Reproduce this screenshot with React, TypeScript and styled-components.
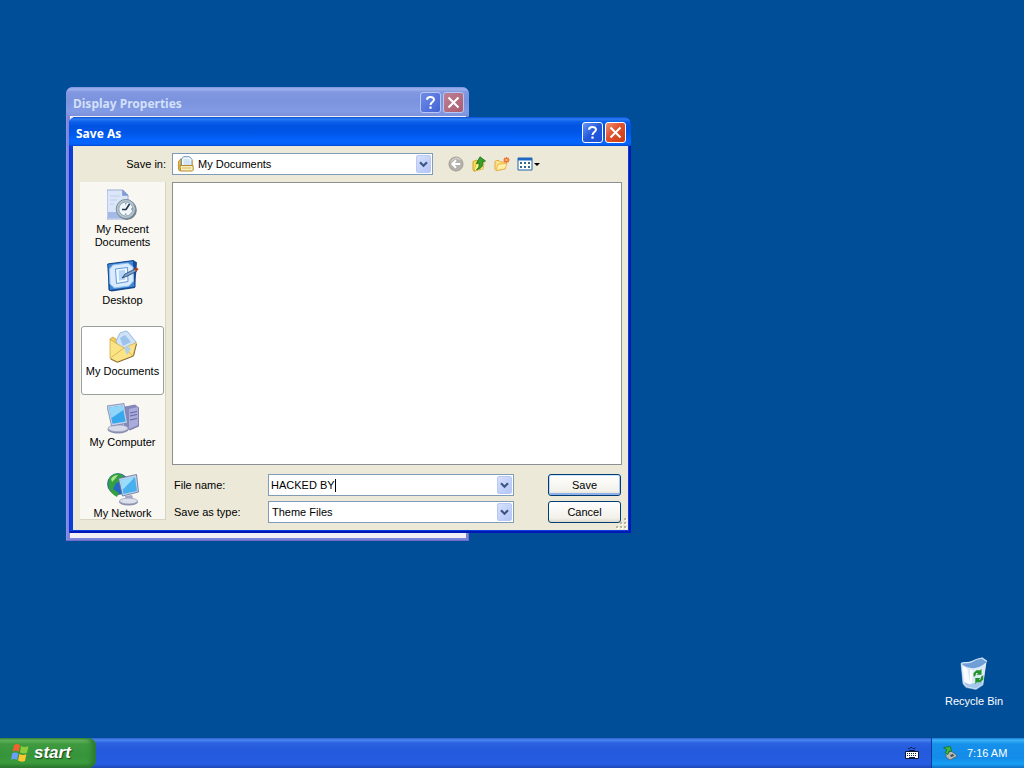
import React from "react";
import styled, { createGlobalStyle, css } from "styled-components";

const GlobalStyle = createGlobalStyle`
  *, *::before, *::after { box-sizing: border-box; }
  body {
    margin: 0;
    background: #004e98;
    color: #000;
    font: 11px/13px "Liberation Sans", Arial, sans-serif;
  }
  button, input, select { font: inherit; color: inherit; margin: 0; }
`;

const Screen = styled.div`
  min-height: 100vh;
  display: flex;
  flex-direction: column;
`;

const Desktop = styled.main`
  position: relative;
  flex: 1;
  min-height: 560px;
`;

const Window = styled.section<{ $active?: boolean }>`
  position: absolute;
  display: flex;
  flex-direction: column;
  padding: 0 3px 3px 4px;
  border-radius: 7px 7px 0 0;
  background: ${(p) => (p.$active ? "#0a3fdc" : "#7d85dc")};
  box-shadow: ${(p) =>
    p.$active
      ? "inset 1px 0 #0831d9, inset -2px -2px #0019b4"
      : "inset -1px -1px #6a6cc8, inset 1px 0 #8f8fe8"};
`;

const PropertiesWindow = styled(Window)`
  left: 66px;
  top: 87px;
  width: 403px;
  height: 454px;
`;

const SaveWindow = styled(Window)`
  left: 69px;
  top: 117px;
  width: 562px;
`;

const TitleBar = styled.header<{ $active?: boolean }>`
  display: flex;
  align-items: center;
  gap: 2px;
  height: 29px;
  margin: 0 -3px 0 -4px;
  padding: 2px 5px 0 7px;
  border-radius: 7px 7px 0 0;
  color: ${(p) => (p.$active ? "#fff" : "#d3e0fa")};
  background: ${(p) =>
    p.$active
      ? "linear-gradient(#0a4fd0 0, #2a7cf4 2px, #0a5fea 5px, #0053e1 9px, #0056e8 16px, #0464fc 23px, #0463f8 27px, #0048d4 29px)"
      : "linear-gradient(#7a90dc 0, #9fb4ee 2px, #8298e0 5px, #7b92de 14px, #839be4 24px, #7a90dc 29px)"};
`;

const Title = styled.h1`
  flex: 1;
  margin: 0;
  padding-top: 2px;
  font: bold 12px/16px "Noto Sans", "Open Sans", sans-serif;
`;

const CaptionButton = styled.button<{ $kind: "help" | "close"; $dim?: boolean }>`
  width: 21px;
  height: 21px;
  padding: 0;
  display: grid;
  place-items: center;
  border: 1px solid ${(p) => (p.$dim ? "#b9c6f2" : "#fff")};
  border-radius: 3px;
  color: #fff;
  background: ${(p) =>
    p.$kind === "help"
      ? p.$dim
        ? "linear-gradient(135deg, #6f8ce8, #4263d4)"
        : "linear-gradient(135deg, #6b96f4, #2459dc 50%, #1c50d4)"
      : p.$dim
        ? "linear-gradient(135deg, #bb8098, #ae5c6c)"
        : "linear-gradient(135deg, #f09076, #e0502c 45%, #c83c14)"};
`;

const EmptyPane = styled.div`
  flex: 1;
  background: #f2f0f4;
`;

const DialogBody = styled.form`
  display: grid;
  grid-template-columns: 86px 1fr;
  grid-template-rows: 22px 290px auto;
  column-gap: 6px;
  padding: 7px 6px 7px 7px;
  background: #ece9d8;
  position: relative;
`;

const SaveInLabel = styled.label`
  justify-self: end;
  line-height: 22px;
`;

const TopRow = styled.div`
  display: flex;
  align-items: center;
`;

const Combo = styled.div`
  display: flex;
  align-items: center;
  height: 22px;
  padding: 1px;
  border: 1px solid #7f9db9;
  background: #fff;
  flex: 1;
`;

const FolderCombo = styled(Combo)`
  flex: 0 0 261px;
  padding-left: 5px;
  gap: 4px;
`;

const fieldText = css`
  border: 0;
  outline: 0;
  padding: 0;
  background: transparent;
  line-height: 18px;
  height: 18px;
`;

const Select = styled.select`
  ${fieldText}
  appearance: none;
  flex: 1;
`;

const TypeSelect = styled(Select)`
  padding-left: 2px;
`;

const NameInput = styled.input`
  ${fieldText}
  width: 64px;
  margin-left: 1px;
  caret-color: transparent;
`;

const Caret = styled.span`
  width: 1px;
  height: 13px;
  margin-right: auto;
  background: #000;
`;

const ArrowBox = styled.span`
  width: 15px;
  height: 18px;
  display: grid;
  place-items: center;
  border: 1px solid #b9c8f4;
  border-radius: 2px;
  background: linear-gradient(135deg, #d6e0fc, #b4c6f6);
`;

const ArrowButton = styled(ArrowBox).attrs({ as: "button", type: "button" })`
  padding: 0;
`;

const Tools = styled.div`
  display: flex;
  align-items: center;
  gap: 7px;
  margin-left: 15px;
`;

const ToolButton = styled.button`
  padding: 0;
  border: 0;
  background: none;
  display: flex;
`;

const Places = styled.nav`
  grid-row: 2 / 4;
  height: 338px;
  margin-top: 7px;
  padding: 2px 1px 0;
  overflow: hidden;
  border-right: 1px solid #d8d4c0;
  border-bottom: 1px solid #d8d4c0;
  background: #f8f7f1;
`;

const Place = styled.button<{ $selected?: boolean }>`
  display: flex;
  flex-direction: column;
  align-items: center;
  width: 100%;
  height: 69px;
  margin-bottom: 2px;
  padding: 3px 0 0;
  border: 1px solid ${(p) => (p.$selected ? "#98a09c" : "transparent")};
  border-radius: 3px;
  background: ${(p) => (p.$selected ? "#fff" : "transparent")};
`;

const PlaceName = styled.span`
  margin-top: 1px;
`;

const FileList = styled.div`
  margin-top: 7px;
  border: 1px solid #8a9094;
  background: #fff;
`;

const Fields = styled.div`
  display: grid;
  grid-template-columns: 90px 1fr 73px;
  row-gap: 5px;
  padding: 9px 1px 0 2px;
  align-items: center;
`;

const ComboCell = styled.div`
  display: flex;
  padding: 0 34px 0 4px;
`;

const PushButton = styled.button<{ $primary?: boolean }>`
  height: 22px;
  padding: 0;
  border: 1px solid #003c74;
  border-radius: 3px;
  background: linear-gradient(#fff, #f2f1ea 80%, #dcd8cc);
  box-shadow: ${(p) =>
    p.$primary
      ? "inset 0 1px #cee7ff, inset 1px 0 #bcd4f6, inset -1px 0 #a9c6f2, inset 0 -2px #8fb0ea"
      : "none"};
`;

const Grip = styled.svg`
  position: absolute;
  right: 1px;
  bottom: 1px;
`;

const DesktopIcon = styled.button`
  position: absolute;
  right: 14px;
  bottom: 30px;
  width: 72px;
  padding: 0;
  border: 0;
  background: none;
  color: #fff;
  display: flex;
  flex-direction: column;
  align-items: center;
  gap: 4px;
`;

const Taskbar = styled.footer`
  display: flex;
  align-items: stretch;
  height: 30px;
  color: #fff;
  background: linear-gradient(#2a5fd0 0, #4a88f0 2px, #2a62e0 5px, #245adc 12px, #255ce2 26px, #1c46b4 30px);
`;

const StartButton = styled.button`
  width: 96px;
  padding: 0 0 0 10px;
  display: flex;
  align-items: center;
  gap: 4px;
  border: 0;
  border-radius: 0 8px 8px 0;
  color: #fff;
  background: linear-gradient(#3c8a3c 0, #6cbc64 2px, #3f9a3f 6px, #36943a 18px, #3c9c3c 25px, #2a7430 30px);
  box-shadow: inset -4px 0 5px #2b7a30;
  font: italic bold 17px/24px "Liberation Sans", Arial, sans-serif;
  text-shadow: 1px 1px 1px #1c4a1c;
`;

const TrayTools = styled.div`
  display: flex;
  align-items: center;
  margin-left: auto;
  padding-right: 12px;
`;

const Tray = styled.div`
  display: flex;
  align-items: center;
  gap: 10px;
  width: 93px;
  padding-left: 11px;
  border-left: 1px solid #0c3c9c;
  background: linear-gradient(#1478d8 0, #3cb4f8 2px, #1690ea 6px, #128ce8 20px, #16a0f4 26px, #1070c4 30px);
`;

const Chevron = () => (
  <svg width="9" height="7" viewBox="0 0 9 7" aria-hidden="true">
    <path d="M1 1.2 4.5 4.7 8 1.2" fill="none" stroke="#3f5683" strokeWidth="2.2" />
  </svg>
);

const HelpMark = () => (
  <svg width="15" height="15" viewBox="0 0 15 15" aria-hidden="true">
    <path d="M4 4.8C4 1.2 11 1.2 11 4.6 11 7 7.5 7 7.5 10" fill="none" stroke="currentColor" strokeWidth="2" />
    <path d="M6.4 11.5h2.2v2.2H6.4z" fill="currentColor" />
  </svg>
);

const CloseMark = () => (
  <svg width="15" height="15" viewBox="0 0 15 15" aria-hidden="true">
    <path d="M2.5 2.5 12.5 12.5M12.5 2.5 2.5 12.5" stroke="currentColor" strokeWidth="2.1" />
  </svg>
);

const Caption = ({ title, active }: { title: string; active?: boolean }) => (
  <TitleBar $active={active}>
    <Title>{title}</Title>
    <CaptionButton type="button" $kind="help" $dim={!active} aria-label="Help">
      <HelpMark />
    </CaptionButton>
    <CaptionButton type="button" $kind="close" $dim={!active} aria-label="Close">
      <CloseMark />
    </CaptionButton>
  </TitleBar>
);

const DocumentsIcon = () => (
  <svg width="16" height="16" viewBox="0 0 16 16" aria-hidden="true">
    <path d="M.5 5.5 3 2.5V14L1.500 15 .5 13.500z" fill="#eebb3c" stroke="#a87c20" strokeWidth=".7" />
    <path d="M3.500 3 5.500.7h6L14 3.500V11H3.500z" fill="#f2f8ff" stroke="#6a94bc" />
    <path d="M5.500 4h6M5.500 6h7M5.500 8h7" stroke="#b4d0ec" />
    <path d="M14.500 4.500v6" stroke="#d8a83c" />
    <path d="M2 9.500h13L15.300 14l-1 1H2.500z" fill="#f8edc0" stroke="#b58a2c" />
    <path d="M4 12h9" stroke="#d8b860" />
  </svg>
);

const BackIcon = () => (
  <svg width="16" height="16" viewBox="0 0 16 16" aria-hidden="true">
    <circle cx="8" cy="8" r="7" fill="#b3b1a9" stroke="#a09e96" />
    <path d="M3 5.5A6 6 0 0 1 12.5 4" fill="none" stroke="#cfcec6" strokeWidth="1.5" />
    <path d="M12.2 8H4.5M8 4.3 4.3 8 8 11.7" fill="none" stroke="#fff" strokeWidth="2" />
  </svg>
);

const UpIcon = () => (
  <svg width="16" height="16" viewBox="0 0 16 16" aria-hidden="true">
    <path d="M2 5.500 6 4l1 1.500 5-1V12L3 15.300 2 14z" fill="#f7df52" stroke="#d0a42a" />
    <path d="M3 15 5 8l8-2-1 7z" fill="#fdf284" stroke="#d8b038" strokeWidth=".8" />
    <path d="M5.500 13.500c2.600-1.300 3-4 2.300-6.500L5.300 7.500 9 .8 14.500 5l-3 .8c1 4.200-1.500 7.200-6 7.700z" fill="#37a02d" stroke="#1c6c1c" strokeWidth=".8" />
  </svg>
);

const NewFolderIcon = () => (
  <svg width="16" height="16" viewBox="0 0 16 16" aria-hidden="true">
    <path d="M1 5.500 2.500 4.500 5 4.500l1.500 1.500H11V13L2 14.500 1 13.500z" fill="#fbe38a" stroke="#e8a83c" />
    <path d="m2 14.500 2-6.300 9-.7-2 5.500z" fill="#fff0a8" stroke="#eaac40" strokeWidth=".8" />
    <path d="M12.500 1v6M9.500 4h6M10.400 2l4.200 4M14.600 2l-4.200 4" stroke="#ee6a2c" strokeWidth="1.300" />
    <circle cx="12.500" cy="4" r="1.200" fill="#ffc070" />
  </svg>
);

const ViewsIcon = () => (
  <svg width="23" height="16" viewBox="0 0 23 16" aria-hidden="true">
    <path d="M1 2h14v12H1z" fill="#fff" stroke="#1c64ac" />
    <path d="M1 2h14v2.500H1z" fill="#1c68c4" />
    <path d="M3 6h2v2H3zm4 0h2v2H7zm4 0h2v2h-2zM3 10h2v2H3zm4 0h2v2H7zm4 0h2v2h-2z" fill="#35688c" />
    <path d="M17 7h6l-3 3z" fill="#000" />
  </svg>
);

const RecentIcon = () => (
  <svg width="32" height="34" viewBox="0 0 32 34" aria-hidden="true">
    <path d="M0 2h16l5 5v24H0z" fill="#dbe6f8" stroke="#9badd6" />
    <path d="M1 24h14v6H1z" fill="#a5b9e6" />
    <path d="M15.500 2v5.500H21z" fill="#7d9cd8" stroke="#7f97c8" strokeWidth=".6" />
    <path d="M3 8h10M3 12h7M3 16h4" stroke="#c8d6f0" strokeWidth="1.500" />
    <circle cx="19.800" cy="22" r="10" fill="#737f8a" />
    <circle cx="18.800" cy="21" r="9.600" fill="#b4c4cf" stroke="#7c8f9c" />
    <circle cx="18.800" cy="21" r="7" fill="#f0f6fa" stroke="#8fa4b2" />
    <path d="M19 21.500 22.500 16M15 21.500h4.500" fill="none" stroke="#23374a" strokeWidth="1.600" />
    <path d="M18.800 15v1.500M18.800 25.500V27M24 21h1.500" stroke="#54707f" />
  </svg>
);

const DesktopPadIcon = () => (
  <svg width="32" height="34" viewBox="0 0 32 34" aria-hidden="true">
    <path d="m1 5 26-3.500 3 2L28 29 4.500 32.500 1.500 31z" fill="#174c98" />
    <path d="M.7 5 26.500 1.500 28 28 2.500 31.500z" fill="#3f86d4" stroke="#16468c" />
    <path d="m6 6 15-2 5 4 .500 14-4.500 5-14.500 2-4.500-4L2.500 10z" fill="#d9ebfc" stroke="#8cc0f0" />
    <path d="m8.500 10 12-1.500.500 14L9.500 24.500z" fill="#f4faff" stroke="#5c98dc" />
    <path d="m11.500 11.500 6.500-.7.300 10-6.300 1z" fill="#b7d7f7" />
    <path d="m15 19 3-4 10-5 2 2-9.500 5z" fill="#7aa2cc" stroke="#1f3e6c" strokeWidth=".8" />
    <path d="m27 10 3-1.500 1.500 2-2.500 2z" fill="#b84020" />
  </svg>
);

const OpenFolderIcon = () => (
  <svg width="32" height="34" viewBox="0 0 32 34" aria-hidden="true">
    <path d="m3 9 3-2 4 3 12-4 5 18-17 6z" fill="#f0cb56" stroke="#c69c3c" strokeWidth=".8" />
    <path d="M9 11 13 3l6-2 2 1 8 10-9 12-9-6z" fill="#cfe2f8" stroke="#85abd8" strokeWidth=".8" />
    <path d="m13 8 5-3 6 7-8 4z" fill="#9bc3ec" />
    <path d="M3 9.500 17 18l12.500-5.500L26 26l-16 6-7-4z" fill="#fbe486" stroke="#d2a848" strokeWidth=".8" />
    <path d="m3.500 28 13.500-10 9 8" fill="none" stroke="#e0b850" />
    <path d="m17 18 4-2 3 3-4 6z" fill="#b3cfe8" />
    <path d="m3.500 29 7 3.300 16-6.300 3-12" fill="none" stroke="#7c6430" strokeWidth=".9" />
  </svg>
);

const ComputerIcon = () => (
  <svg width="32" height="34" viewBox="0 0 32 34" aria-hidden="true">
    <path d="m18 6 10-2 4 3v18l-9 4-6-3z" fill="#8587bc" stroke="#7678ac" strokeWidth=".8" />
    <path d="m22 8 9-2v18l-9 4z" fill="#a9abd8" />
    <path d="m23 12 7-1.500M23 15l7-1.500M23 19l7-1.500" stroke="#6669a4" strokeWidth="1.200" />
    <path d="m8 23 8-1 1 5H8z" fill="#a4a8c8" />
    <ellipse cx="11" cy="28.500" rx="10.500" ry="4" fill="#8a8eae" />
    <ellipse cx="11" cy="27.300" rx="10" ry="3.400" fill="#d7dae8" stroke="#9a9ebc" strokeWidth=".7" />
    <path d="m0 5 17-2.500 3.500 19.500-16 3z" fill="#c7d2e8" stroke="#7384ac" strokeWidth=".8" />
    <path d="M2 6.500 15.500 4.600 18.700 20.500 5.500 22.800z" fill="#38a8ee" />
    <path d="m2 6.500 13.500-1.900 1 4.400L4.500 17z" fill="#8fd6fb" />
  </svg>
);

const NetworkIcon = () => (
  <svg width="34" height="34" viewBox="0 0 34 34" aria-hidden="true">
    <circle cx="12" cy="12" r="10.500" fill="#2468c4" stroke="#2a5ca8" strokeWidth=".7" />
    <path d="M4 5c5-5 10-4 14-1l-3 6-5 1-3 6 6 4-2 4C3 21 0 12 4 5z" fill="#35a040" />
    <path d="M5 7c2-3 4-4 7-4l-3 4-3 3z" fill="#a8e48a" />
    <path d="m19 24 7-1 2 6h-8z" fill="#a4a8c8" />
    <ellipse cx="22.500" cy="30" rx="9.500" ry="3.500" fill="#898dae" />
    <ellipse cx="22.500" cy="29" rx="9" ry="2.900" fill="#dcdfec" stroke="#9a9ebc" strokeWidth=".7" />
    <path d="m12.500 6.500 18-4L32.500 20 16.500 24z" fill="#c5d3ea" stroke="#5b7098" strokeWidth=".8" />
    <path d="m14.500 8 14.500-3 2 14-13.500 3z" fill="#48b0ee" />
    <path d="m14.500 8 14.500-3L16.500 18z" fill="#9adcfb" />
  </svg>
);

const RecycleIcon = () => (
  <svg width="32" height="34" viewBox="0 0 32 34" aria-hidden="true">
    <path d="M3 6.500 28 3 25 28l-7 4.500-10-2-3-3.500z" fill="#c6dcf2" stroke="#8fb5da" strokeWidth=".6" />
    <path d="M3 6.500C7 4 10 7 14 4.500S21 1 24 1l5 3.500c-4 6-8 7-14 7.500S6 10 3 6.500z" fill="#6f9fd6" />
    <path d="M3 6.500C7 4.500 10 7 14 4.500S21 1.500 24 1l5 3.500" fill="none" stroke="#d4e8fa" strokeWidth="1.200" />
    <path d="M3 6.500c7 6 17 7 25.500-1.500L25 27l-7 5-9-2-4-4z" fill="#dce9f6" />
    <path d="m4.500 9 5 3 2.500 15-5.500-2zM12 13h3l-1 13-2 1z" fill="#f8fcff" />
    <path d="m5.500 25 6 2.500 7-2 6-1.500v3l-6.500 4.500-9-2z" fill="#a4c8ec" />
    <path d="M15.500 19.500v-3.200l3-3h3.700l1.300-1.500v6h-5l1.600-1.900-1.800.2-1.300 3.400z" fill="#239329" />
    <path d="M25.300 18.300v4.200l-3 2.800h-3.500l-1.500 1.900v-6.300h5.200l-1.800 2 1.500-.2 1.200-3.400z" fill="#239329" />
  </svg>
);

const FlagIcon = () => (
  <svg width="20" height="20" viewBox="0 0 20 20" aria-hidden="true">
    <path d="M4 2c3-1.500 4-1 6 .3L8.700 8.800C6.500 7.400 5 7.500 2.700 8.400z" fill="#f0622c" />
    <path d="M11 3c2.500 1.300 4.300 1.200 7.500.2L17 9.800c-2.700 1-4.200.8-7-.4z" fill="#8ccc3c" />
    <path d="M2.400 10c2.600-1 4-.7 6 .4L7 17c-2.200-1.400-3.700-1.300-6-.4z" fill="#6a9ef8" />
    <path d="M9.400 11c2.600 1.300 4.300 1.300 7 .3L15 18c-2.600 1-4.300.8-7-.5z" fill="#fbc832" />
  </svg>
);

const KeyboardIcon = () => (
  <svg width="14" height="14" viewBox="0 0 14 14" aria-hidden="true">
    <path d="M3 2.500h1.500l1-1H7l1 1h1.500l1-1M4 4.500h6" fill="none" stroke="#081c50" />
    <path d="M.5 5.500h13v7H.5z" fill="#fff" stroke="#0a1638" />
    <path d="M2 7.500h10M2 9.500h10" stroke="#10204c" strokeDasharray="1 1" />
    <path d="M4 11.500h6" stroke="#10204c" />
  </svg>
);

const TrayDeviceIcon = () => (
  <svg width="14" height="16" viewBox="0 0 14 16" aria-hidden="true">
    <path d="m3 9 5-3 5.500 4v1.500L7 15 3 12z" fill="#b8bcb8" stroke="#50606c" strokeWidth=".8" />
    <path d="m7 10 3-1 1 2-3 1z" fill="#39505e" />
    <path d="m.5 2.500 7-1 1 5-2.500-.5-1 3.500L2 7.500 4 5z" fill="#40b83c" stroke="#167026" strokeWidth=".8" />
  </svg>
);

const places = [
  { name: ["My Recent", "Documents"], icon: <RecentIcon /> },
  { name: ["Desktop"], icon: <DesktopPadIcon /> },
  { name: ["My Documents"], icon: <OpenFolderIcon />, selected: true },
  { name: ["My Computer"], icon: <ComputerIcon /> },
  { name: ["My Network"], icon: <NetworkIcon /> },
];

const gripDots = [[8, 0], [4, 4], [8, 4], [0, 8], [4, 8], [8, 8]];

export default function App() {
  return (
    <Screen>
      <GlobalStyle />
      <Desktop>
        <PropertiesWindow aria-label="Display Properties">
          <Caption title="Display Properties" />
          <EmptyPane />
        </PropertiesWindow>

        <SaveWindow $active aria-label="Save As">
          <Caption title="Save As" active />
          <DialogBody onSubmit={(e) => e.preventDefault()}>
            <SaveInLabel htmlFor="folder">Save in:</SaveInLabel>
            <TopRow>
              <FolderCombo>
                <DocumentsIcon />
                <Select id="folder">
                  <option>My Documents</option>
                </Select>
                <ArrowBox><Chevron /></ArrowBox>
              </FolderCombo>
              <Tools>
                <ToolButton type="button" aria-label="Back"><BackIcon /></ToolButton>
                <ToolButton type="button" aria-label="Up one level"><UpIcon /></ToolButton>
                <ToolButton type="button" aria-label="Create new folder"><NewFolderIcon /></ToolButton>
                <ToolButton type="button" aria-label="Views"><ViewsIcon /></ToolButton>
              </Tools>
            </TopRow>
            <Places aria-label="Places">
              {places.map((p) => (
                <Place key={p.name[0]} type="button" $selected={p.selected}>
                  {p.icon}
                  <PlaceName>
                    {p.name.map((line, i) => (
                      <React.Fragment key={line}>
                        {i > 0 && <br />}
                        {line}
                      </React.Fragment>
                    ))}
                  </PlaceName>
                </Place>
              ))}
            </Places>
            <FileList />
            <Fields>
              <label htmlFor="name">File name:</label>
              <ComboCell>
                <Combo>
                  <NameInput id="name" type="text" defaultValue="HACKED BY " />
                  <Caret />
                  <ArrowButton aria-label="Recent names"><Chevron /></ArrowButton>
                </Combo>
              </ComboCell>
              <PushButton type="submit" $primary>Save</PushButton>
              <label htmlFor="type">Save as type:</label>
              <ComboCell>
                <Combo>
                  <TypeSelect id="type">
                    <option>Theme Files</option>
                  </TypeSelect>
                  <ArrowBox><Chevron /></ArrowBox>
                </Combo>
              </ComboCell>
              <PushButton type="button">Cancel</PushButton>
            </Fields>
            <Grip width="11" height="11" viewBox="0 0 11 11" aria-hidden="true">
              {gripDots.map(([x, y]) => (
                <g key={`${x}-${y}`}>
                  <rect x={x + 1} y={y + 1} width="2" height="2" fill="#fff" />
                  <rect x={x} y={y} width="2" height="2" fill="#bab49c" />
                </g>
              ))}
            </Grip>
          </DialogBody>
        </SaveWindow>

        <DesktopIcon type="button">
          <RecycleIcon />
          <span>Recycle Bin</span>
        </DesktopIcon>
      </Desktop>

      <Taskbar>
        <StartButton type="button">
          <FlagIcon />
          start
        </StartButton>
        <TrayTools><KeyboardIcon /></TrayTools>
        <Tray>
          <TrayDeviceIcon />
          <time>7:16 AM</time>
        </Tray>
      </Taskbar>
    </Screen>
  );
}
